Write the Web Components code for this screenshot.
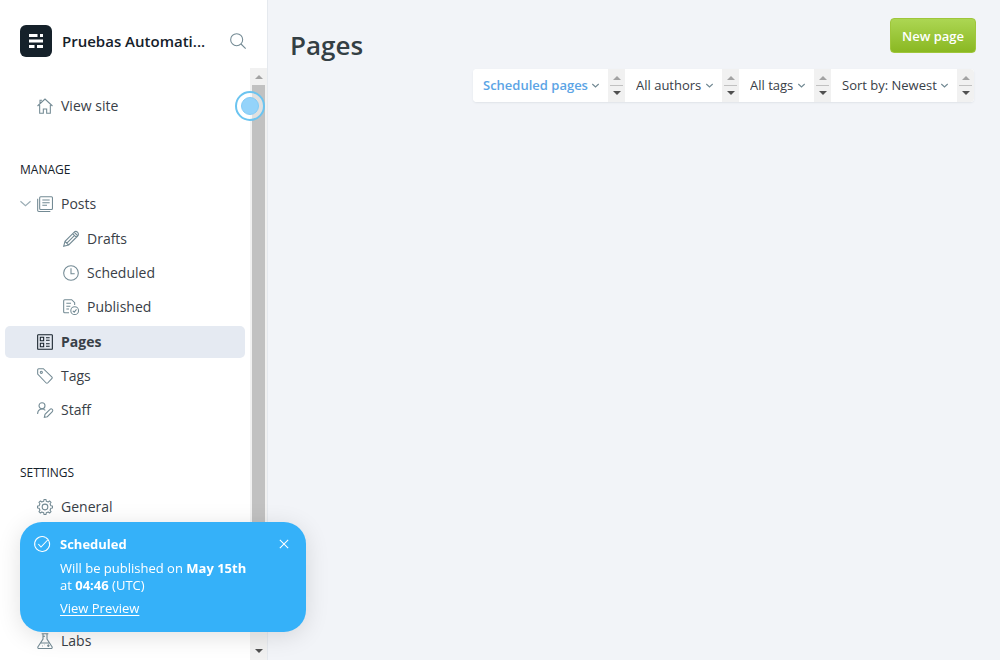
<!DOCTYPE html>
<html lang="en">
<head>
<meta charset="utf-8">
<title>Pages</title>
<style>
html, body { margin: 0; height: 100%; }
body { font-family: "Open Sans", "Noto Sans", sans-serif; font-size: 14px; color: #394047; background: #f2f4f8; }
</style>
</head>
<body>
<admin-app></admin-app>
<script>
// Outline of a cog with eight rounded teeth, centred in a 24-unit box.
function cogPath() {
  const points = [];
  for (let tooth = 0; tooth < 8; tooth++) {
    for (const [offset, radius] of [[-12, 9], [-8, 11.3], [8, 11.3], [12, 9]]) {
      const angle = (tooth * 45 + offset) * Math.PI / 180;
      points.push((12 + radius * Math.sin(angle)).toFixed(2) + ' ' + (12 - radius * Math.cos(angle)).toFixed(2));
    }
  }
  return 'M' + points.join('L') + 'z';
}

const ICONS = {
  home: '<path d="M.8 12 12 1.500l11.200 10.500M4 10.500V23h5.500v-6.500h5V23H20V10.500M4.500 7.500V3.500h3"/>',
  posts: '<rect x="4" y="1" width="19.200" height="19.200" rx="1.500"/><path d="M1 4v17.500a1.700 1.700 0 0 0 1.700 1.700H20M8 6h11M8 10h11M8 14h7"/>',
  pencil: '<path d="M1 23l2-7.500L16.500 2a3.500 3.500 0 0 1 5.500 5.500L8.500 21zM3 15.500 8.500 21M14.500 4l5.500 5.500M17 2l5.500 5.500M5.800 18.200 17 7"/>',
  clock: '<circle cx="12" cy="12" r="11"/><path d="M12 5v8h5.500"/>',
  published: '<path d="M9 20.500H2.500A1.500 1.500 0 0 1 1 19V2.500A1.500 1.500 0 0 1 2.500 1H13l4.500 4.500V9M5 6.500h7M5 11h6M5 15h4"/><circle cx="17.500" cy="17.500" r="5.800"/><path d="m14.800 17.700 2 2 3.500-4"/>',
  pages: '<rect x="1" y="1" width="22" height="22" rx="1"/><path d="M5 5h5v5H5zM5 14h5v5H5zM13.500 5.500H19M13.500 9.500H19M13.500 14.500H19M13.500 18.500H19"/>',
  tag: '<path d="M1 9V2.500A1.500 1.500 0 0 1 2.500 1H9.500l13 12.500a1.500 1.500 0 0 1 0 2L16 22.500a1.500 1.500 0 0 1-2.200 0z"/><circle cx="6.500" cy="6.500" r="1.600"/>',
  staff: '<circle cx="7.500" cy="5.500" r="4.500"/><path d="M1 18v-1a6.700 6.700 0 0 1 11.500-4.500M11 23l1-4.500 7.500-7.500a2.200 2.200 0 0 1 3.500 3.300L15.500 22z"/>',
  gear: `<circle cx="12" cy="12" r="4.300"/><path d="${cogPath()}" stroke-linejoin="round"/>`,
  labs: '<path d="M7 1h10M9 1v8L1.500 20.500A1.700 1.700 0 0 0 3 23.200h18a1.700 1.700 0 0 0 1.500-2.700L15 9V1M9 5h3M5 15h14M15 19h4M17 17v4M7.500 19.500h1M11.500 17.500h.5"/>',
  search: '<circle cx="10" cy="10" r="9"/><path d="m16.500 16.500 7 7"/>',
  check: '<path d="M17.500 2.200A11.200 11.200 0 1 0 22.600 8M6.500 12l4 4.500L20.500 6"/><path d="M17.500 2.200A11 11 0 0 1 22.600 8"/>',
  close: '<path d="m2 2 20 20M22 2 2 22"/>',
  chevron: '<path d="m1 7 11 10L23 7"/>'
};

class BaseElement extends HTMLElement {
  connectedCallback() {
    if (this.shadowRoot) return;
    const template = document.createElement('template');
    template.innerHTML = `<style>*{box-sizing:border-box}${this.styles()}</style>${this.markup()}`;
    this.attachShadow({ mode: 'open' }).append(template.content.cloneNode(true));
  }
}

customElements.define('ui-icon', class extends BaseElement {
  styles() { return ':host{display:block;flex:none;width:16px;height:16px;color:#738a94}svg{display:block;width:100%;height:100%;overflow:visible}'; }
  markup() {
    return `<svg viewBox="0 0 24 24" fill="none" stroke="currentColor" stroke-width="${this.getAttribute('weight') || '1.600'}" aria-hidden="true">${ICONS[this.getAttribute('name')]}</svg>`;
  }
});

customElements.define('nav-item', class extends BaseElement {
  styles() { return `
    :host{display:block;position:relative;padding:1px 5px}
    a{display:flex;align-items:center;gap:8px;height:32px;padding-left:32px;border-radius:5px;color:#394047;text-decoration:none;line-height:20px}
    :host([nested]) a{padding-left:58px}
    :host([active]) a{background:#e5eaf2;font-weight:700}
    :host([active]) ui-icon{color:#15212a}
    button{position:absolute;left:20px;top:11px;border:0;padding:0;background:none}
    button ui-icon{width:11px;height:11px;color:#9badb5}`; }
  markup() {
    return `${this.hasAttribute('expandable') ? '<button aria-label="Collapse"><ui-icon name="chevron" weight="2.500"></ui-icon></button>' : ''}
    <a href="#"><ui-icon name="${this.getAttribute('icon')}"></ui-icon><slot></slot></a>`;
  }
});

customElements.define('nav-section', class extends BaseElement {
  styles() { return `
    :host{display:block;margin-bottom:38px}
    h2{margin:0;padding:0 20px 9px;font-size:12px;line-height:16px;font-weight:400;color:#15212a}`; }
  markup() { return `<h2>${this.getAttribute('heading')}</h2><slot></slot>`; }
});

customElements.define('scroll-track', class extends BaseElement {
  styles() { return `
    :host{display:flex;flex-direction:column;align-items:center;justify-content:space-between;flex:none;width:17px;background:#f1f1f1;padding:7px 0}
    i{width:0;border:4px solid transparent;border-top:0;border-bottom:4px solid #a3a3a3}
    i.down{border-top:4px solid #505050;border-bottom:0}
    span{flex:1;width:13px;margin:6px 0 80px;background:#c1c1c1}
    :host([compact]) span{flex:none;height:1px;margin:0}`; }
  markup() { return '<i></i><span></span><i class="down"></i>'; }
});

customElements.define('side-bar', class extends BaseElement {
  styles() { return `
    :host{display:flex;flex-direction:column;flex:none;width:268px;background:#fff;border-right:1px solid #e5e9ee;overflow:hidden}
    header{display:flex;align-items:center;gap:10px;height:68px;padding:14px 21px 0 20px;flex:none}
    .logo{width:32px;height:32px;flex:none}
    h1{flex:1;margin:0;font-size:15px;line-height:20px;font-weight:600;white-space:nowrap;color:#15212a}
    header button{border:0;padding:0;background:none}
    .body{display:flex;flex:1;min-height:0}
    nav{flex:1;min-width:0;padding-top:21px;overflow:hidden}
    .site{margin-bottom:39px}
    .sub{padding:1px 0}
    .last{margin-top:100px}`; }
  markup() { return `
    <header>
      <svg class="logo" viewBox="0 0 32 32" aria-hidden="true"><rect width="32" height="32" rx="6" fill="#15212a"/><path fill="#fff" d="M9 9h8.500v3H9zM20 9h3v3h-3zM9 14.500h14v3H9zM9 20h5.500v3H9zM17 20h6v3h-6z"/></svg>
      <h1>Pruebas Automati...</h1>
      <button aria-label="Search"><ui-icon name="search"></ui-icon></button>
    </header>
    <div class="body">
      <nav>
        <nav-item class="site" icon="home">View site</nav-item>
        <nav-section heading="MANAGE">
          <nav-item icon="posts" expandable>Posts</nav-item>
          <div class="sub">
            <nav-item icon="pencil" nested>Drafts</nav-item>
            <nav-item icon="clock" nested>Scheduled</nav-item>
            <nav-item icon="published" nested>Published</nav-item>
          </div>
          <nav-item icon="pages" active>Pages</nav-item>
          <nav-item icon="tag">Tags</nav-item>
          <nav-item icon="staff">Staff</nav-item>
        </nav-section>
        <nav-section heading="SETTINGS">
          <nav-item icon="gear">General</nav-item>
          <nav-item class="last" icon="labs">Labs</nav-item>
        </nav-section>
      </nav>
      <scroll-track></scroll-track>
    </div>`; }
});

customElements.define('filter-select', class extends BaseElement {
  styles() { return `
    :host{display:flex;background:#fff;height:33px}
    label{display:flex;align-items:center;gap:4px;padding:0 9px 1px 10px}
    select{appearance:none;border:0;margin:0;padding:0;background:none;font:inherit;font-size:13px;line-height:20px;color:#394047}
    :host([selected]) select{color:#5ba4e5;font-weight:600}
    ui-icon{width:7px;height:7px}`; }
  markup() {
    const text = this.getAttribute('value');
    return `<label><select aria-label="${text}"><option>${text}</option></select><ui-icon name="chevron" weight="4"></ui-icon></label><scroll-track compact></scroll-track>`;
  }
});

customElements.define('page-content', class extends BaseElement {
  styles() { return `
    :host{display:block;flex:1;min-width:0;padding:18px 24px 0 22px}
    header{display:flex;justify-content:space-between;align-items:flex-start}
    h2{margin:8px 0 0;font-size:26px;line-height:38px;font-weight:600;color:#343f44}
    button{height:35px;padding:0 11px;border:1px solid #9fc63b;border-radius:4px;background:linear-gradient(#acd653,#8ab822);color:#fff;font:inherit;font-size:13px;font-weight:600}
    .filters{display:flex;width:max-content;margin:5px 2px 0 auto;gap:1px;border-radius:4px;overflow:hidden;background:#fff;box-shadow:0 1px 2px #dfe3e8}`; }
  markup() { return `
    <header><h2>Pages</h2><button>New page</button></header>
    <div class="filters">
      <filter-select value="Scheduled pages" selected></filter-select>
      <filter-select value="All authors"></filter-select>
      <filter-select value="All tags"></filter-select>
      <filter-select value="Sort by: Newest"></filter-select>
    </div>`; }
});

customElements.define('toast-message', class extends BaseElement {
  styles() { return `
    :host{display:flex;gap:10px;position:fixed;left:20px;bottom:28px;width:286px;height:110px;padding:14px 17px 0 14px;border-radius:22px;background:#35b1f9;color:#fff;font-size:13px;line-height:17px;box-shadow:0 4px 24px #0000001f}
    ui-icon{color:#fff}
    .copy{flex:1;min-width:0}
    h3{margin:0 0 7px;font-size:13px;line-height:17px;font-weight:700}
    p{margin:0 0 6px}
    a{color:#fff;text-underline-offset:2px}
    button{align-self:flex-start;border:0;background:none;padding:3px 0}
    button ui-icon{width:10px;height:10px}`; }
  markup() { return `
    <ui-icon name="check"></ui-icon>
    <div class="copy"><h3>Scheduled</h3><p>Will be published on <b>May 15th</b><br>at <b>04:46</b> (UTC)</p><a href="#">View Preview</a></div>
    <button aria-label="Close"><ui-icon name="close" weight="2.500"></ui-icon></button>`; }
});

customElements.define('tour-beacon', class extends BaseElement {
  styles() { return `
    :host{position:absolute;left:235px;top:91px;box-sizing:border-box;display:grid;place-items:center;width:30px;height:30px;border:2px solid #6bc4f0;border-radius:50%;background:#ffffff80}
    i{width:18px;height:18px;border:1px solid #82cbf6;border-radius:50%;background:#94d3fa}`; }
  markup() { return '<i></i>'; }
});

customElements.define('admin-app', class extends BaseElement {
  styles() { return ':host{display:flex;position:relative;height:100vh;overflow:hidden}'; }
  markup() { return '<side-bar></side-bar><page-content></page-content><tour-beacon></tour-beacon><toast-message></toast-message>'; }
});
</script>
</body>
</html>
